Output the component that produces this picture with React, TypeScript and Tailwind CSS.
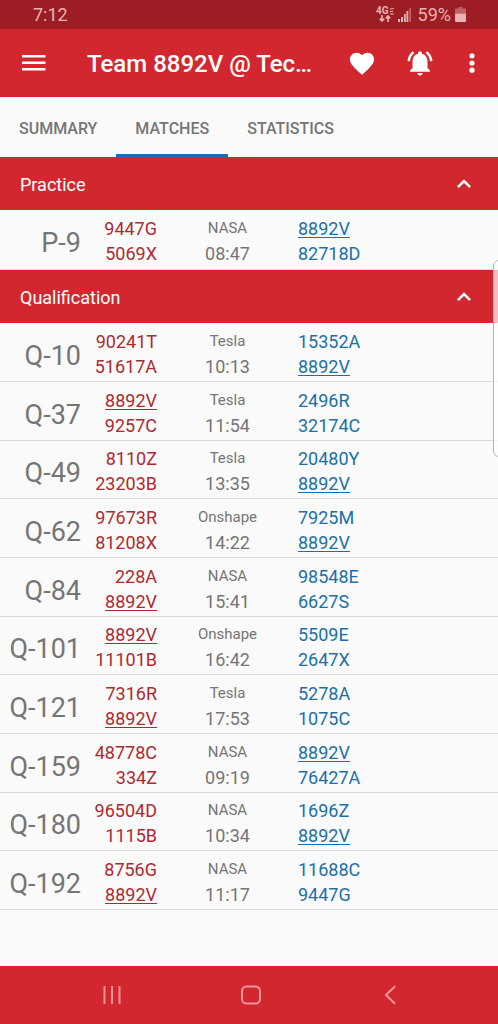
import React, { useState } from "react";

type Match = {
  name: string;
  red: [string, string];
  field: string;
  time: string;
  blue: [string, string];
};

const TEAM = "8892V";

const practice: Match[] = [
  { name: "P-9", red: ["9447G", "5069X"], field: "NASA", time: "08:47", blue: ["8892V", "82718D"] },
];

const qualification: Match[] = [
  { name: "Q-10", red: ["90241T", "51617A"], field: "Tesla", time: "10:13", blue: ["15352A", "8892V"] },
  { name: "Q-37", red: ["8892V", "9257C"], field: "Tesla", time: "11:54", blue: ["2496R", "32174C"] },
  { name: "Q-49", red: ["8110Z", "23203B"], field: "Tesla", time: "13:35", blue: ["20480Y", "8892V"] },
  { name: "Q-62", red: ["97673R", "81208X"], field: "Onshape", time: "14:22", blue: ["7925M", "8892V"] },
  { name: "Q-84", red: ["228A", "8892V"], field: "NASA", time: "15:41", blue: ["98548E", "6627S"] },
  { name: "Q-101", red: ["8892V", "11101B"], field: "Onshape", time: "16:42", blue: ["5509E", "2647X"] },
  { name: "Q-121", red: ["7316R", "8892V"], field: "Tesla", time: "17:53", blue: ["5278A", "1075C"] },
  { name: "Q-159", red: ["48778C", "334Z"], field: "NASA", time: "09:19", blue: ["8892V", "76427A"] },
  { name: "Q-180", red: ["96504D", "1115B"], field: "NASA", time: "10:34", blue: ["1696Z", "8892V"] },
  { name: "Q-192", red: ["8756G", "8892V"], field: "NASA", time: "11:17", blue: ["11688C", "9447G"] },
];

function StatusBar() {
  return (
    <div className="flex h-[29px] items-center justify-between bg-[#9c1d23] pl-[33px] pr-8 text-lg text-[#e9b3b6]">
      <span>7:12</span>
      <div className="flex items-center">
        <div className="flex flex-col items-center">
          <div className="flex items-center gap-px">
            <span className="text-[10px] font-bold leading-[8px]">4G</span>
            <svg width="4" height="7" viewBox="0 0 4 7" stroke="currentColor" aria-hidden="true">
              <path d="M0 .8h4M0 3.4h3M0 6h4" />
            </svg>
          </div>
          <svg width="12" height="7" viewBox="0 0 12 7" fill="none" stroke="currentColor" strokeWidth="1.600" aria-hidden="true">
            <path d="M3 0v6M.8 3.6 3 6l2.200-2.400M9 7V1M6.800 3.400 9 1l2.200 2.400" />
          </svg>
        </div>
        <svg className="ml-1 mr-[7px]" width="13" height="14" viewBox="0 0 13 14" fill="currentColor" aria-hidden="true">
          <path d="M0 11h2v3H0zM3 9h2v5H3zM6 6h1.800v8H6zM8.500 3h1.800v11H8.500z" />
          <path d="M11.200 0H13v14h-1.800z" opacity=".45" />
        </svg>
        <span>59%</span>
        <svg className="ml-1" width="11" height="15" viewBox="0 0 11 15" fill="currentColor" aria-hidden="true">
          <path d="M3.500 0h4v1.500H11v5H0v-5h3.500z" opacity=".45" />
          <path d="M0 6.500h11V14a1 1 0 0 1-1 1H1a1 1 0 0 1-1-1z" />
        </svg>
      </div>
    </div>
  );
}

function AppBar() {
  return (
    <header className="flex h-[68px] items-center bg-[#d32730] pl-[18px] pr-[10px] text-white">
      <button aria-label="Menu" className="flex size-8 items-center justify-center">
        <svg width="24" height="18" viewBox="0 0 24 18" fill="currentColor" aria-hidden="true">
          <path d="M0 1h23.500v2.500H0zM0 7.500h23.500V10H0zM0 14h23.500v2.500H0z" />
        </svg>
      </button>
      <h1 className="ml-[37px] min-w-0 flex-1 truncate pt-0.5 text-2xl font-medium">Team 8892V @ Tec…</h1>
      <button aria-label="Favorite" className="flex size-8 items-center justify-center">
        <svg width="30" height="29" viewBox="0 0 24 24" fill="currentColor" aria-hidden="true">
          <path d="M12 21.350l-1.450-1.320C5.400 15.360 2 12.280 2 8.500 2 5.420 4.420 3 7.500 3c1.740 0 3.410.81 4.500 2.090C13.090 3.810 14.760 3 16.500 3 19.580 3 22 5.420 22 8.500c0 3.780-3.400 6.860-8.550 11.540L12 21.350z" />
        </svg>
      </button>
      <button aria-label="Notifications" className="ml-[26px] flex size-8 items-center justify-center">
        <svg width="30" height="30" viewBox="0 0 24 24" fill="currentColor" aria-hidden="true">
          <path d="M7.580 4.080L6.150 2.650C3.750 4.480 2.170 7.300 2.030 10.500h2c.15-2.650 1.510-4.970 3.550-6.420zm12.390 6.420h2c-.15-3.200-1.730-6.020-4.120-7.850l-1.420 1.430c2.020 1.450 3.390 3.770 3.540 6.420zM18 11c0-3.070-1.640-5.640-4.500-6.320V4c0-.83-.67-1.500-1.500-1.500s-1.500.67-1.500 1.500v.68C7.630 5.360 6 7.920 6 11v5l-2 2v1h16v-1l-2-2v-5zm-6 11c.14 0 .27-.01.400-.04.650-.14 1.180-.58 1.440-1.180.1-.24.150-.5.150-.78h-4c.01 1.100.9 2 2.010 2z" />
        </svg>
      </button>
      <button aria-label="More options" className="ml-5 flex size-8 items-center justify-center">
        <svg width="6" height="20" viewBox="0 0 6 20" fill="currentColor" aria-hidden="true">
          <circle cx="3" cy="2.800" r="2.600" />
          <circle cx="3" cy="10" r="2.600" />
          <circle cx="3" cy="17.200" r="2.600" />
        </svg>
      </button>
    </header>
  );
}

function Tabs() {
  const [active, setActive] = useState("MATCHES");
  return (
    <div role="tablist" className="flex h-[60px]">
      {["SUMMARY", "MATCHES", "STATISTICS"].map((tab) => (
        <button
          key={tab}
          role="tab"
          aria-selected={tab === active}
          onClick={() => setActive(tab)}
          className={
            "border-b-[3px] px-[19px] pt-1.5 text-base font-medium text-[#757575] " +
            (tab === active ? "border-[#1f6cb0]" : "border-transparent")
          }
        >
          {tab}
        </button>
      ))}
    </div>
  );
}

function Alliance({ teams }: { teams: [string, string] }) {
  return (
    <>
      {teams.map((team) => (
        <div key={team} className={team === TEAM ? "underline decoration-1 underline-offset-2" : ""}>
          {team}
        </div>
      ))}
    </>
  );
}

function Section({ title, matches }: { title: string; matches: Match[] }) {
  const [open, setOpen] = useState(true);
  return (
    <section>
      <h2>
        <button
          aria-expanded={open}
          onClick={() => setOpen(!open)}
          className="flex h-[53px] w-full items-center justify-between bg-[#d32730] pl-5 pr-[27px] text-lg text-white"
        >
          <span className="pt-0.5">{title}</span>
          <svg
            className={open ? "" : "rotate-180"}
            width="14"
            height="9"
            viewBox="0 0 14 9"
            fill="none"
            stroke="currentColor"
            strokeWidth="2.500"
            aria-hidden="true"
          >
            <path d="M.9 8.100 7 2l6.100 6.100" />
          </svg>
        </button>
      </h2>
      {open && (
        <table className="w-full table-fixed border-separate border-spacing-0 text-lg leading-[25px]">
          <colgroup>
            <col className="w-[81px]" />
            <col className="w-[76px]" />
            <col className="w-[141px]" />
            <col />
          </colgroup>
          <tbody>
            {matches.map((match) => (
              <tr key={match.name} className="h-[59px] only:h-[60px] nth-[3n]:h-[58px]">
                <th
                  scope="row"
                  className="border-b border-[#d8d8d8] p-0 pt-2 text-right text-[27px] font-normal text-[#757575]"
                >
                  {match.name}
                </th>
                <td className="border-b border-[#d8d8d8] p-0 pt-[3px] text-right text-[#ae2a31]">
                  <Alliance teams={match.red} />
                </td>
                <td className="border-b border-[#d8d8d8] p-0 pt-[3px] text-center text-[#757575]">
                  <div className="text-[15px] leading-[25px]">{match.field}</div>
                  <div>{match.time}</div>
                </td>
                <td className="border-b border-[#d8d8d8] p-0 pt-[3px] text-[#1b70a9]">
                  <Alliance teams={match.blue} />
                </td>
              </tr>
            ))}
          </tbody>
        </table>
      )}
    </section>
  );
}

function NavigationBar() {
  return (
    <nav className="grid h-[58px] grid-cols-3 bg-[#d32730] pl-[42px] pr-[38px] text-[#f4949a]">
      <button aria-label="Recent apps" className="flex items-center justify-center">
        <svg width="20" height="20" viewBox="0 0 20 20" fill="none" stroke="currentColor" strokeWidth="2" aria-hidden="true">
          <path d="M2.500 1v18M10 1v18M17.500 1v18" />
        </svg>
      </button>
      <button aria-label="Home" className="flex items-center justify-center">
        <svg width="20" height="20" viewBox="0 0 20 20" fill="none" stroke="currentColor" strokeWidth="2" aria-hidden="true">
          <rect x="1" y="1.500" width="18" height="17" rx="4.500" />
        </svg>
      </button>
      <button aria-label="Back" className="flex items-center justify-center">
        <svg width="12" height="20" viewBox="0 0 12 20" fill="none" stroke="currentColor" strokeWidth="2" aria-hidden="true">
          <path d="M11 1.300 2 10l9 8.700" />
        </svg>
      </button>
    </nav>
  );
}

export default function App() {
  return (
    <div className="relative flex min-h-screen flex-col overflow-hidden bg-[#fafafa] font-['Roboto',sans-serif]">
      <StatusBar />
      <AppBar />
      <Tabs />
      <main className="flex-1">
        <Section title="Practice" matches={practice} />
        <Section title="Qualification" matches={qualification} />
      </main>
      <NavigationBar />
      <div className="absolute -right-1 top-[260px] h-[197px] w-[9px] rounded-l-md border border-[#b5b5b5] bg-white/70" />
    </div>
  );
}
